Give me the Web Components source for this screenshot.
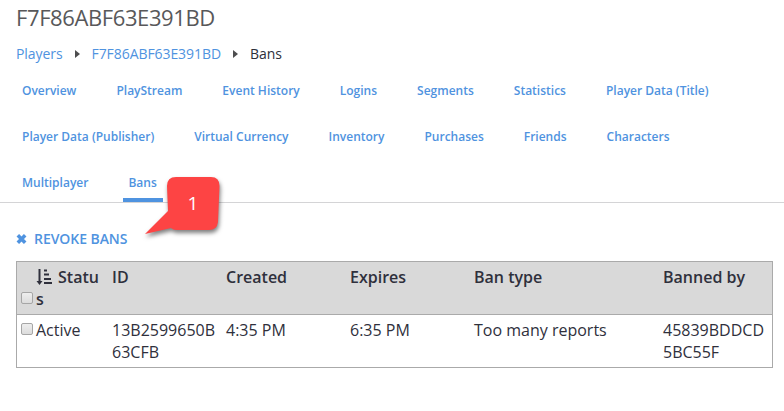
<!DOCTYPE html>
<html lang="en"><head><meta charset="utf-8"><title>Player bans</title>
<style>
html,body{margin:0;background:#fff;height:411px;overflow:hidden}
body{font-family:"Open Sans","Noto Sans",sans-serif}
</style></head><body>
<bans-page></bans-page>
<script>
const define=(name,html)=>customElements.define(name,class extends HTMLElement{
  constructor(){super();const t=document.createElement('template');t.innerHTML=html;this.attachShadow({mode:'open'}).append(t.content.cloneNode(true));}
});
define('page-title',`<style>:host{display:block;padding:2px 16px 2px;height:30px;line-height:30px;font-size:22px;letter-spacing:-.4px;color:#58585a;white-space:nowrap}</style><slot></slot>`);
define('crumb-sep',`<style>:host{display:block;width:5px;height:8px;margin:0 12px;flex:none}svg{display:block}</style><svg width="5" height="8"><path d="M0 0L5 4L0 8Z" fill="#4d4d4f"/></svg>`);
define('bread-crumbs',`<style>:host{display:flex;align-items:center;height:20px;padding:10px 16px 0;font-size:14px;line-height:20px;letter-spacing:-.07px;color:#2d2f3a;white-space:nowrap}::slotted(a){color:#4f93e0}</style><slot></slot>`);
define('nav-tab',`<style>:host{display:block;box-sizing:border-box;height:34px;margin:0 30px 12px 0;padding:6px 5px 0;border-bottom:4px solid transparent;font-size:12px;line-height:18px;font-weight:580;color:#4f93e0;white-space:nowrap}:host([active]){border-color:#4f93e0;margin-bottom:0;padding-right:6px}</style><slot></slot>`);
define('nav-tabs',`<style>:host{display:flex;flex-wrap:wrap;align-content:flex-start;box-sizing:border-box;height:127px;margin-top:12px;padding:0 16px 0 17px;border-bottom:1px solid #d4d4d6}</style><slot></slot>`);
define('action-link',`<style>:host{display:flex;align-items:center;height:22px;margin:25px 16px 11px;font-size:14px;line-height:22px;font-weight:550;letter-spacing:-.06px;color:#4f93e0}svg{margin-right:7px}</style><svg width="11" height="10" viewBox="0 0 11 10"><path d="M1.800 1.200L9.200 8.800M9.200 1.200L1.800 8.800" stroke="currentColor" stroke-width="3.500"/></svg><slot></slot>`);
define('check-box',`<style>:host{display:block;box-sizing:border-box;width:12px;height:12px;border:1px solid #a6a6a6;border-radius:2px;background:linear-gradient(#eee,#dcdcdc)}</style>`);
define('sort-icon',`<style>:host{display:inline-block;width:16px;height:17px;margin-right:6px;vertical-align:-3px}svg{display:block}</style><svg width="16" height="17"><path d="M3.500 0V13" stroke="#2f303c" stroke-width="2"/><path d="M.500 12H6.500L3.500 16Z" fill="#2f303c"/><path d="M8 1.500H11M8 5.500H13M8 10H15M8 14H16" stroke="#2f303c" stroke-width="2"/></svg>`);
define('table-row',`<style>:host{display:grid;grid-template-columns:19px 76px 114px 124px 124px 189px 109px;box-sizing:border-box;height:53px;padding-top:4px;font-size:16px;line-height:22px;font-weight:400;color:#2f303c}:host([head]){background:#d9d9d9;border-bottom:1px solid #aaa;font-weight:570}::slotted(*){white-space:nowrap}::slotted(check-box){margin:4px 0 0 4px}::slotted(check-box[low]){margin-top:26px}</style><slot></slot>`);
define('data-table',`<style>:host{display:block;box-sizing:border-box;width:757px;height:107px;margin-left:16px;border:1px solid #aaa}</style><slot></slot>`);
define('call-out',`<style>:host{position:absolute;left:135px;top:168px;width:100px;height:80px;font-size:19px;line-height:26px;color:#fff}svg{position:absolute;inset:0;filter:drop-shadow(1px 3px 2px rgba(0,0,0,.5))}span{position:absolute;left:32px;width:52px;top:22px;text-align:center}</style><svg width="100" height="80"><path d="M41 9H76Q84.500 9 84.500 18L83 54Q82 62 74 62H41Q38 62 36 60L10 66L33 43L32 18Q32 9 41 9Z" fill="#fd4444"/></svg><span><slot></slot></span>`);
define('bans-page',`<style>:host{display:block;position:relative;width:784px;height:411px;background:#fff;overflow:hidden}</style>
<page-title>F7F86ABF63E391BD</page-title>
<bread-crumbs><a>Players</a><crumb-sep></crumb-sep><a>F7F86ABF63E391BD</a><crumb-sep></crumb-sep><span>Bans</span></bread-crumbs>
<nav-tabs>${['Overview','PlayStream','Event History','Logins','Segments','Statistics','Player Data (Title)','Player Data (Publisher)','Virtual Currency','Inventory','Purchases','Friends','Characters','Multiplayer'].map(t=>`<nav-tab>${t}</nav-tab>`).join('')}<nav-tab active>Bans</nav-tab></nav-tabs>
<action-link>REVOKE BANS</action-link>
<data-table>
<table-row head><check-box low></check-box><div><sort-icon></sort-icon>Statu<br>s</div><div>ID</div><div>Created</div><div>Expires</div><div>Ban type</div><div>Banned by</div></table-row>
<table-row><check-box></check-box><div>Active</div><div>13B2599650B<br>63CFB</div><div>4:35 PM</div><div>6:35 PM</div><div>Too many reports</div><div>45839BDDCD<br>5BC55F</div></table-row>
</data-table>
<call-out>1</call-out>`);
</script></body></html>
